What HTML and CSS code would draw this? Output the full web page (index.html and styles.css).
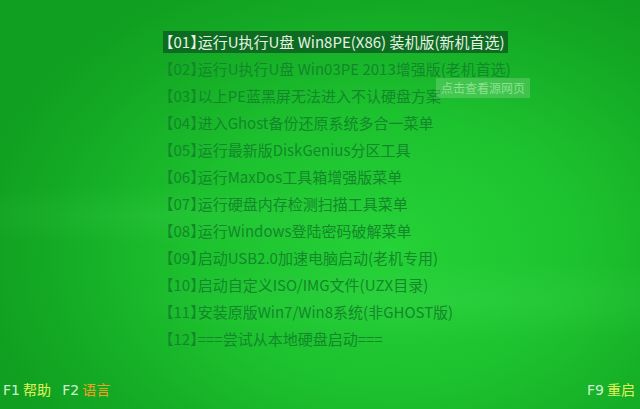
FILE: index.html
```html
<!DOCTYPE html>
<html lang="zh-CN">
<head>
<meta charset="utf-8">
<title>启动菜单</title>
<link rel="stylesheet" href="styles.css">
</head>
<body>
<div class="screen">
  <ul class="menu">
    <li class="item active">【01】运行U执行U盘 Win8PE(X86) 装机版(新机首选)</li>
    <li class="item">【02】运行U执行U盘 Win03PE 2013增强版(老机首选)</li>
    <li class="item">【03】以上PE蓝黑屏无法进入不认硬盘方案</li>
    <li class="item">【04】进入Ghost备份还原系统多合一菜单</li>
    <li class="item">【05】运行最新版DiskGenius分区工具</li>
    <li class="item">【06】运行MaxDos工具箱增强版菜单</li>
    <li class="item">【07】运行硬盘内存检测扫描工具菜单</li>
    <li class="item">【08】运行Windows登陆密码破解菜单</li>
    <li class="item">【09】启动USB2.0加速电脑启动(老机专用)</li>
    <li class="item">【10】启动自定义ISO/IMG文件(UZX目录)</li>
    <li class="item">【11】安装原版Win7/Win8系统(非GHOST版)</li>
    <li class="item">【12】===尝试从本地硬盘启动===</li>
  </ul>
  <div class="tip">点击查看源网页</div>
  <div class="footer">
    <div class="keys">
      <span class="key">F1</span> <span class="help">帮助</span>
      <span class="key gap">F2</span> <span class="lang">语言</span>
    </div>
    <div class="keys">
      <span class="key">F9</span> <span class="help">重启</span>
    </div>
  </div>
</div>
</body>
</html>
```
FILE: styles.css
```css
html, body {
  margin: 0;
  padding: 0;
}
body {
  width: 640px;
  height: 409px;
  overflow: hidden;
  font-family: "Noto Sans CJK SC", "Noto Sans", sans-serif;
}
.screen {
  position: relative;
  width: 640px;
  height: 409px;
  display: flex;
  flex-direction: column;
  background:
    radial-gradient(ellipse 360px 40px at 470px 300px, rgba(120,255,140,0.10), rgba(120,255,140,0) 100%),
    radial-gradient(ellipse 300px 30px at 150px 215px, rgba(120,255,140,0.08), rgba(120,255,140,0) 100%),
    radial-gradient(ellipse 420px 300px at 390px 250px, #25d237 0%, #1dc22f 45%, #14aa25 80%, #109f20 100%);
}
.menu {
  list-style: none;
  margin: 0;
  padding: 31px 0 0 163px;
  flex: 1;
}
.item {
  width: fit-content;
  height: 22px;
  line-height: 22px;
  margin-bottom: 5px;
  padding: 0 3px 0 3px;
  font-size: 15px;
  font-feature-settings: "halt";
  color: #12882a;
  white-space: nowrap;
}
.item.active {
  background: #0e6c22;
  color: #e6f2e4;
}
.tip {
  position: absolute;
  left: 436px;
  top: 78px;
  width: 94px;
  height: 20px;
  line-height: 20px;
  background: rgba(210,240,210,0.22);
  color: rgba(170,235,170,0.75);
  font-size: 12px;
  text-align: center;
}
.footer {
  display: flex;
  justify-content: space-between;
  align-items: center;
  height: 22px;
  margin-bottom: 9px;
  padding: 0 5px 0 3px;
  font-size: 14px;
}
.key {
  font-family: "DejaVu Sans", sans-serif;
  color: #cdf2d2;
}
.gap {
  margin-left: 8px;
}
.help {
  color: #e2f25a;
}
.lang {
  color: #eca21e;
}
```
